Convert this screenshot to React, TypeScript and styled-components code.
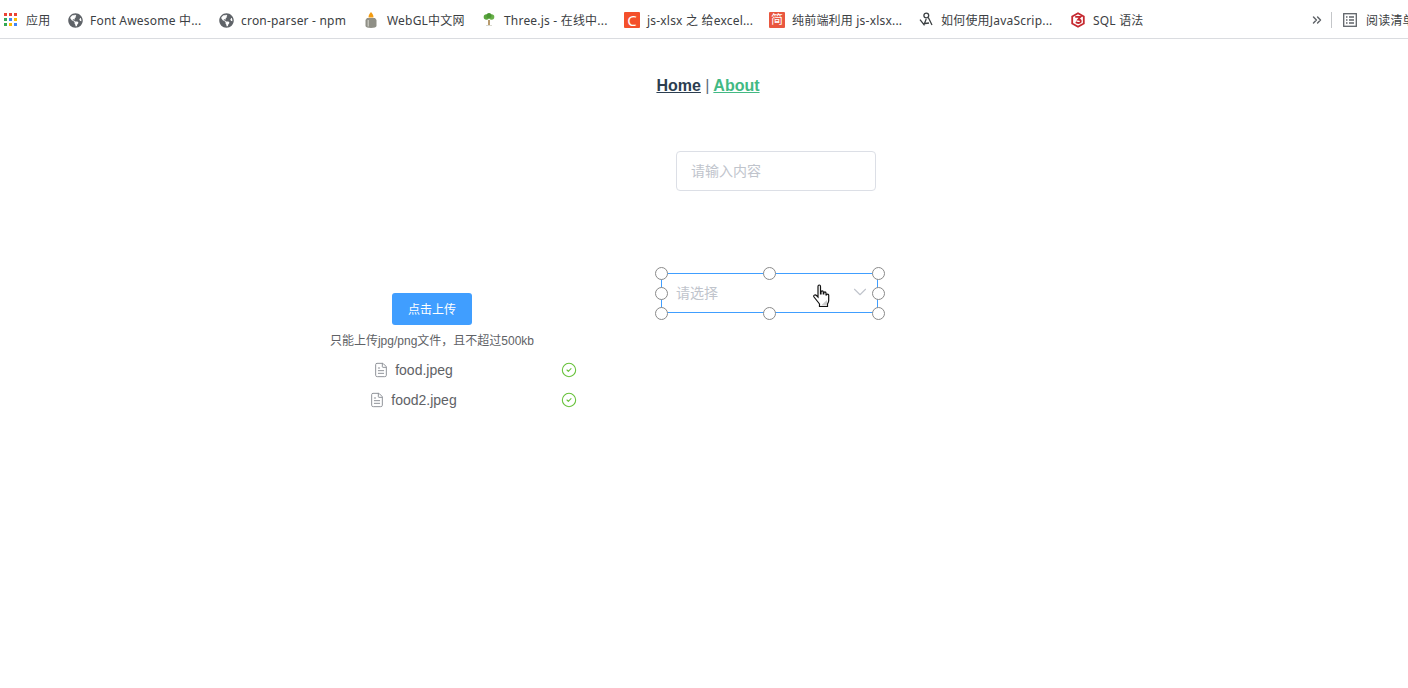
import React from 'react';
import styled, { createGlobalStyle } from 'styled-components';
import { ChevronDown, ChevronsRight, CircleCheck, FileText } from 'lucide-react';
import { FaGlobeAmericas } from 'react-icons/fa';

const GlobalStyle = createGlobalStyle`
  html, body {
    margin: 0;
    padding: 0;
    background: #fff;
    overflow: hidden;
  }
  * {
    box-sizing: border-box;
  }
`;

const UI_FONT = `"Noto Sans", "Noto Sans CJK SC", sans-serif`;
const PAGE_FONT = `"Liberation Sans", "Noto Sans CJK SC", sans-serif`;

const Page = styled.div`
  width: 1408px;
  height: 688px;
  overflow: hidden;
  font-family: ${PAGE_FONT};
`;

const BookmarkBar = styled.div`
  height: 39px;
  display: flex;
  align-items: center;
  padding: 2px 0 0 3px;
  border-bottom: 1px solid #dadce0;
  white-space: nowrap;
  font-family: ${UI_FONT};
  font-size: 12px;
  letter-spacing: 0.2px;
  color: #3c4043;
`;

const Bookmark = styled.div<{ $width: number }>`
  width: ${(p) => p.$width}px;
  flex: none;
  display: flex;
  align-items: center;
  gap: 7px;
`;

const FavSlot = styled.span`
  width: 16px;
  height: 16px;
  flex: none;
  display: flex;
  align-items: center;
  justify-content: center;
  color: #5f6368;
`;

const LetterFav = styled.span<{ $bg: string; $size: number }>`
  width: 16px;
  height: 16px;
  border-radius: 1px;
  background: ${(p) => p.$bg};
  color: #fff;
  font-size: ${(p) => p.$size}px;
  letter-spacing: 0;
  line-height: 16px;
  text-align: center;
`;

const BarTools = styled.div`
  margin-left: auto;
  width: 98px;
  flex: none;
  display: flex;
  align-items: center;
  color: #5f6368;
  svg {
    flex: none;
  }
`;

const ToolDivider = styled.span`
  width: 1px;
  height: 16px;
  flex: none;
  margin: 0 11px 0 7px;
  background: #c4c6c9;
`;

const ReadingLabel = styled.span`
  margin-left: 9px;
  flex: none;
  color: #3c4043;
`;

const Nav = styled.nav`
  padding: 38px 0 0 8px;
  text-align: center;
  font-size: 16px;
  line-height: 18px;
  font-weight: 700;
  color: #2c3e50;
`;

const NavSeparator = styled.span`
  font-weight: 400;
  color: #5a6b7c;
`;

const NavLink = styled.a<{ $active?: boolean }>`
  color: ${(p) => (p.$active ? '#42b983' : '#2c3e50')};
  text-decoration: underline;
`;

const Stage = styled.div`
  display: flex;
  align-items: flex-start;
  gap: 80px;
  margin-top: 56px;
  padding-left: 283px;
`;

const UploadColumn = styled.section`
  width: 298px;
  margin-top: 142px;
  display: flex;
  flex-direction: column;
`;

const UploadButton = styled.button`
  width: 80px;
  height: 32px;
  margin-left: 109px;
  padding: 0 0 2px;
  border: 0;
  border-radius: 3px;
  background: #409eff;
  color: #fff;
  font-family: ${PAGE_FONT};
  font-size: 12px;
`;

const Tip = styled.div`
  margin-top: 7px;
  text-align: center;
  font-size: 12px;
  line-height: 18px;
  color: #606266;
`;

const FileList = styled.ul`
  list-style: none;
  margin: 5px 0 0;
  padding: 0;
`;

const FileRow = styled.li`
  height: 30px;
  display: flex;
  align-items: center;
  justify-content: center;
  position: relative;
  padding-right: 38px;
  font-size: 14px;
  color: #606266;
`;

const FileIcon = styled(FileText)`
  width: 16px;
  height: 16px;
  margin-right: 6px;
  color: #909399;
`;

const DoneIcon = styled(CircleCheck)`
  position: absolute;
  right: 4px;
  top: 7px;
  width: 16px;
  height: 16px;
  color: #67c23a;
`;

const FormColumn = styled.section`
  width: 217px;
  display: flex;
  flex-direction: column;
  gap: 82px;
`;

const TextInput = styled.input`
  width: 200px;
  height: 40px;
  margin-left: 15px;
  padding: 0 15px 0 14px;
  border: 1px solid #dcdfe6;
  border-radius: 4px;
  font-family: ${PAGE_FONT};
  font-size: 14px;
  outline: none;
  &::placeholder {
    color: #c0c4cc;
  }
`;

const SelectFrame = styled.div`
  position: relative;
  height: 40px;
  display: flex;
  align-items: center;
  justify-content: space-between;
  padding: 0 6px 2px 14px;
  border: 1px solid #409eff;
  font-size: 14px;
  color: #c0c4cc;
`;

const HandleLayer = styled.div`
  position: absolute;
  inset: -1px;
`;

const Handle = styled.span<{ $x: number; $y: number }>`
  position: absolute;
  left: calc(${(p) => p.$x}% - 6.5px);
  top: calc(${(p) => p.$y}% - 6.5px);
  width: 13px;
  height: 13px;
  border: 1px solid #8a8a8a;
  border-radius: 50%;
  background: #fff;
`;

const Pointer = styled.svg`
  position: absolute;
  left: 151px;
  top: 10px;
  width: 18px;
  height: 24px;
`;

const AppsIcon = () => {
  const colors = ['#ea4335', '#ea4335', '#ea4335', '#34a853', '#4285f4', '#fbbc04', '#34a853', '#fbbc04', '#4285f4'];
  return (
    <svg width="16" height="16" viewBox="0 0 16 16">
      {colors.map((c, i) => (
        <rect key={i} x={1 + (i % 3) * 5} y={1 + Math.floor(i / 3) * 5} width="3" height="3" fill={c} />
      ))}
    </svg>
  );
};

const BottleIcon = () => (
  <svg width="16" height="16" viewBox="0 0 16 16">
    <path d="M7 0c1.500 1.500 2.500 3 2.500 5.500h-5C4.500 3 5.500 1.500 7 0z" fill="#f39c12" />
    <path d="M3 6h8l1.500 2v6c0 1-2.500 2-5.500 2s-5.500-1-5.500-2V8z" fill="#8f8f86" />
    <path d="M3.500 8H5v6.500H3.500z" fill="#c2c2b9" />
  </svg>
);

const TreeIcon = () => (
  <svg width="16" height="16" viewBox="0 0 16 16">
    <path d="M7 8h2v5H7z" fill="#b89b6e" />
    <path d="M5 13.500h6" stroke="#d9d9d0" />
    <circle cx="5.500" cy="5" r="2.800" fill="#5aa53e" />
    <circle cx="10.500" cy="5" r="2.800" fill="#68b049" />
    <circle cx="8" cy="3.500" r="2.500" fill="#4a9633" />
  </svg>
);

const SwirlIcon = () => (
  <svg width="16" height="16" viewBox="0 0 16 16" fill="none" stroke="#3c4043" strokeWidth="1.300">
    <circle cx="8.300" cy="3.500" r="2.400" />
    <path d="M2 7.700l4 5L8.200 7M10.300 5.500L14 13M7 11.500l4-.5" />
  </svg>
);

const SqlIcon = () => (
  <svg width="16" height="16" viewBox="0 0 16 16" fill="none" stroke="#c5282f" strokeWidth="1.800">
    <path d="M8 1.200l5.800 3.300v7L8 14.800l-5.800-3.300v-7z" />
    <path d="M5.200 4.800h5.300L8.200 7.500c1.800 0 2.600.7 2.600 1.700 0 1.400-1.800 2.100-3.400 1.700l-1.700-.7" />
  </svg>
);

const ReadingIcon = () => (
  <svg width="14" height="14" viewBox="0 0 14 14" fill="none" stroke="#5f6368" strokeWidth="1.300">
    <rect x=".7" y=".7" width="12.600" height="12.600" />
    <path d="M3 4h1.500M6 4h5M3 7h1.500M6 7h5M3 10h1.500M6 10h5" />
  </svg>
);

const bookmarks: { label: string; width: number; icon: React.ReactNode }[] = [
  { label: '应用', width: 64, icon: <AppsIcon /> },
  { label: 'Font Awesome 中...', width: 151, icon: <FaGlobeAmericas size={15} /> },
  { label: 'cron-parser - npm', width: 146, icon: <FaGlobeAmericas size={15} /> },
  { label: 'WebGL中文网', width: 117, icon: <BottleIcon /> },
  { label: 'Three.js - 在线中...', width: 143, icon: <TreeIcon /> },
  { label: 'js-xlsx 之 给excel...', width: 145, icon: <LetterFav $bg="#f4502b" $size={15}>C</LetterFav> },
  { label: '纯前端利用 js-xlsx...', width: 149, icon: <LetterFav $bg="#e9573f" $size={12}>简</LetterFav> },
  { label: '如何使用JavaScrip...', width: 152, icon: <SwirlIcon /> },
  { label: 'SQL 语法', width: 90, icon: <SqlIcon /> },
];

const handles = [
  [0, 0],
  [50, 0],
  [100, 0],
  [0, 50],
  [100, 50],
  [0, 100],
  [50, 100],
  [100, 100],
];

function App() {
  return (
    <Page>
      <GlobalStyle />
      <BookmarkBar>
        {bookmarks.map((b) => (
          <Bookmark key={b.label} $width={b.width}>
            <FavSlot>{b.icon}</FavSlot>
            {b.label}
          </Bookmark>
        ))}
        <BarTools>
          <ChevronsRight size={14} strokeWidth={2.5} />
          <ToolDivider />
          <ReadingIcon />
          <ReadingLabel>阅读清单</ReadingLabel>
        </BarTools>
      </BookmarkBar>

      <Nav>
        <NavLink>Home</NavLink> <NavSeparator>|</NavSeparator> <NavLink $active>About</NavLink>
      </Nav>

      <Stage>
        <UploadColumn>
          <UploadButton>点击上传</UploadButton>
          <Tip>只能上传jpg/png文件，且不超过500kb</Tip>
          <FileList>
            {['food.jpeg', 'food2.jpeg'].map((name) => (
              <FileRow key={name}>
                <FileIcon strokeWidth={1.5} />
                {name}
                <DoneIcon strokeWidth={1.6} />
              </FileRow>
            ))}
          </FileList>
        </UploadColumn>

        <FormColumn>
          <TextInput placeholder="请输入内容" />
          <SelectFrame>
            请选择
            <ChevronDown size={22} strokeWidth={1.2} />
            <HandleLayer>
              {handles.map(([x, y]) => (
                <Handle key={`${x}-${y}`} $x={x} $y={y} />
              ))}
            </HandleLayer>
            <Pointer viewBox="0 0 18 24">
              <path
                d="M5 2.500c0-2 2.500-2 2.500 0V10h.5V8c0-1.500 2.300-1.500 2.300 0v2h.5V9c0-1.400 2.200-1.400 2.200 0v2h.5c0-1.300 2.200-1.300 2.200 0v5.500c0 1.500-.6 2.500-1.200 3.500v2.500H6.500V20C5 18 3 15.500 1 13c-1-1.500 1-3 2.500-1.500L5 13z"
                fill="#fff"
                stroke="#111"
                strokeWidth="1.200"
              />
              <path d="M8 21.500L14 16v5.500z" fill="#ccc" />
            </Pointer>
          </SelectFrame>
        </FormColumn>
      </Stage>
    </Page>
  );
}

export default App;
